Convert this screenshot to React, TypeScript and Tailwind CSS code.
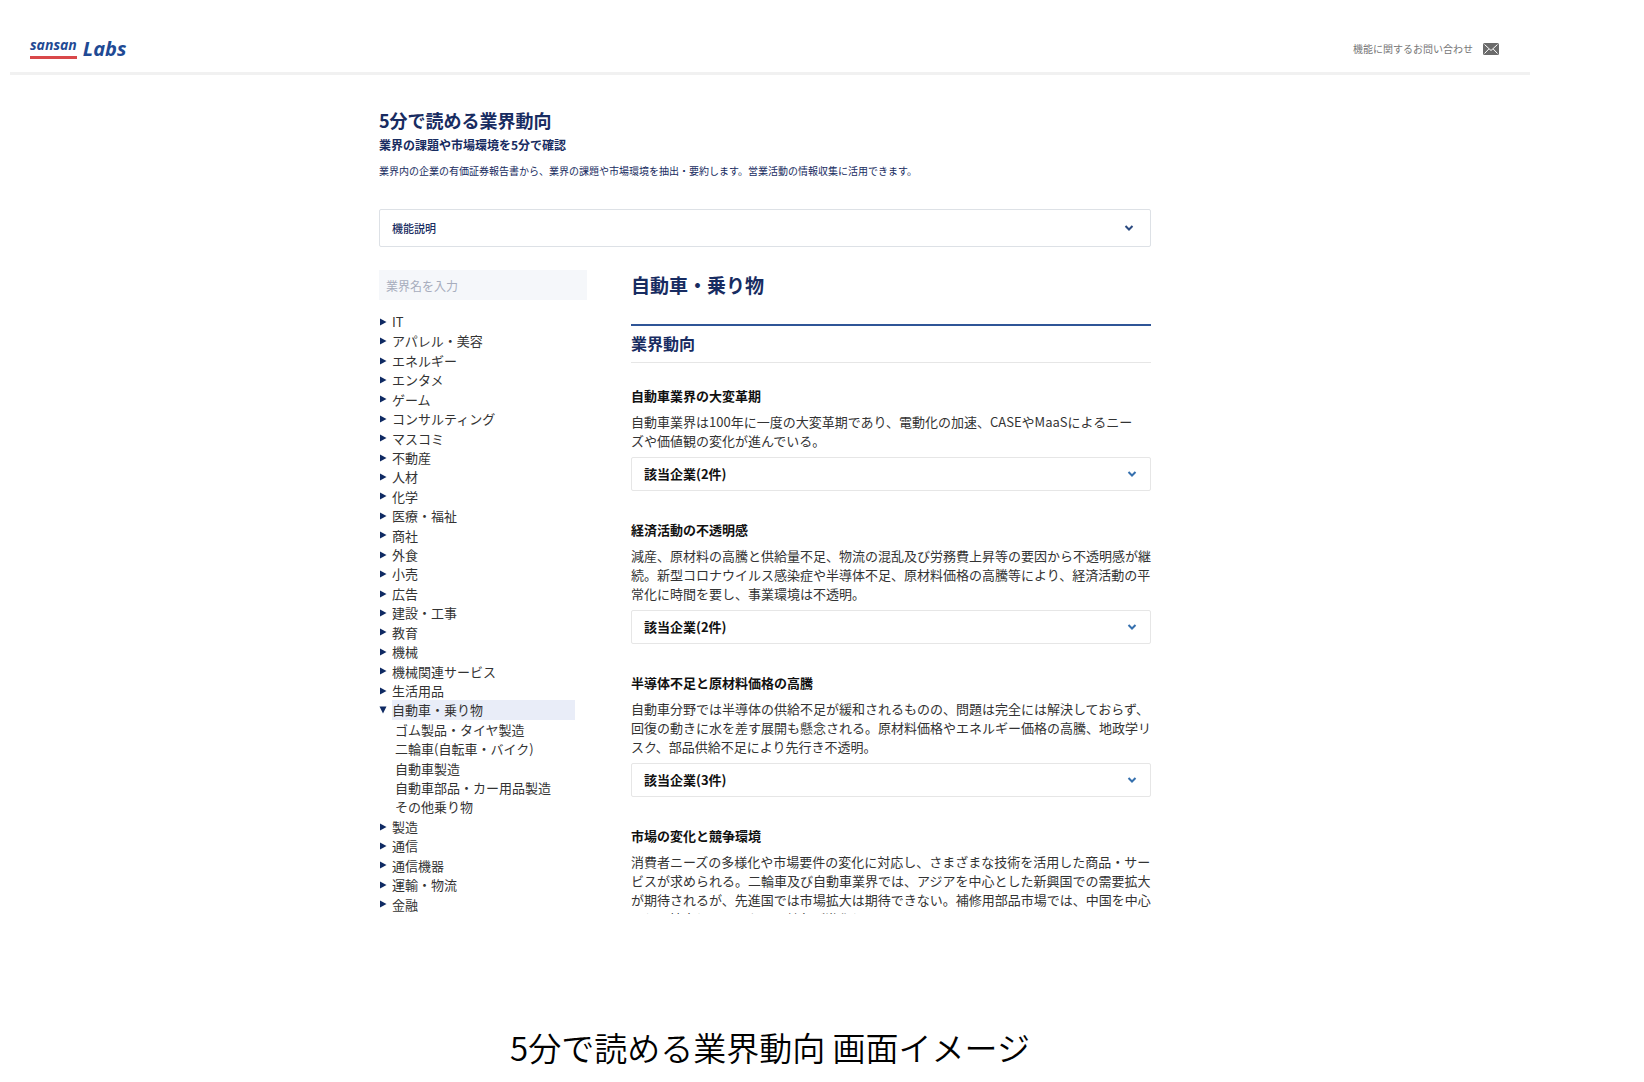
import type { FC } from 'react';

type Industry = {
  name: string;
  children?: string[];
};

type Topic = {
  title: string;
  body: string;
  companies?: number;
};

const industries: Industry[] = [
  { name: 'IT' },
  { name: 'アパレル・美容' },
  { name: 'エネルギー' },
  { name: 'エンタメ' },
  { name: 'ゲーム' },
  { name: 'コンサルティング' },
  { name: 'マスコミ' },
  { name: '不動産' },
  { name: '人材' },
  { name: '化学' },
  { name: '医療・福祉' },
  { name: '商社' },
  { name: '外食' },
  { name: '小売' },
  { name: '広告' },
  { name: '建設・工事' },
  { name: '教育' },
  { name: '機械' },
  { name: '機械関連サービス' },
  { name: '生活用品' },
  {
    name: '自動車・乗り物',
    children: [
      'ゴム製品・タイヤ製造',
      '二輪車(自転車・バイク)',
      '自動車製造',
      '自動車部品・カー用品製造',
      'その他乗り物',
    ],
  },
  { name: '製造' },
  { name: '通信' },
  { name: '通信機器' },
  { name: '運輸・物流' },
  { name: '金融' },
];

const topics: Topic[] = [
  {
    title: '自動車業界の大変革期',
    body: '自動車業界は100年に一度の大変革期であり、電動化の加速、CASEやMaaSによるニー\nズや価値観の変化が進んでいる。',
    companies: 2,
  },
  {
    title: '経済活動の不透明感',
    body: '減産、原材料の高騰と供給量不足、物流の混乱及び労務費上昇等の要因から不透明感が継\n続。新型コロナウイルス感染症や半導体不足、原材料価格の高騰等により、経済活動の平\n常化に時間を要し、事業環境は不透明。',
    companies: 2,
  },
  {
    title: '半導体不足と原材料価格の高騰',
    body: '自動車分野では半導体の供給不足が緩和されるものの、問題は完全には解決しておらず、\n回復の動きに水を差す展開も懸念される。原材料価格やエネルギー価格の高騰、地政学リ\nスク、部品供給不足により先行き不透明。',
    companies: 3,
  },
  {
    title: '市場の変化と競争環境',
    body: '消費者ニーズの多様化や市場要件の変化に対応し、さまざまな技術を活用した商品・サー\nビスが求められる。二輪車及び自動車業界では、アジアを中心とした新興国での需要拡大\nが期待されるが、先進国では市場拡大は期待できない。補修用部品市場では、中国を中心\nとして拡大しているため、競争が激化している。',
  },
];

const Chevron: FC<{ className: string }> = ({ className }) => (
  <svg
    viewBox="0 0 10 6"
    className={`h-[6px] w-[10px] shrink-0 fill-none stroke-2 ${className}`}
    aria-hidden="true"
  >
    <path d="M1.5 1l3.5 3.5L8.5 1" />
  </svg>
);

const Marker: FC<{ open: boolean }> = ({ open }) => (
  <svg viewBox="0 0 8 8" className="size-2 shrink-0 fill-[#0f2a63]" aria-hidden="true">
    <path d={open ? 'M0.5 0.5h7L4 7.5z' : 'M1 0.5v7L7.5 4z'} />
  </svg>
);

const Logo: FC = () => (
  <a href="#top" className="flex items-center gap-[6px] font-['Open_Sans',sans-serif] text-[#1f4a94]">
    <span className="flex flex-col gap-1">
      <span className="text-sm leading-[14px] font-bold italic">sansan</span>
      <span className="h-[3px] bg-[#d9484a]" />
    </span>
    <span className="text-xl leading-5 font-bold italic">Labs</span>
  </a>
);

const Header: FC = () => (
  <header className="flex items-center justify-between border-b-3 border-[#f1f1f1] pt-[25px] pr-[31px] pl-5">
    <div className="flex h-[47px] items-center">
      <Logo />
    </div>
    <a href="#contact" className="flex items-center gap-[10px] text-[10px] leading-4 text-[#777]">
      機能に関するお問い合わせ
      <svg viewBox="0 0 16 12" className="h-3 w-4" aria-hidden="true">
        <rect width="16" height="12" rx="1.5" fill="#6b6b6b" />
        <path
          d="M1.5 1.5L8 7.5l6.500-6M1.500 10.500l4.300-4.500M14.500 10.500l-4.300-4.500"
          fill="none"
          stroke="#fff"
          strokeWidth="1"
        />
      </svg>
    </a>
  </header>
);

const Sidebar: FC = () => (
  <aside className="flex w-52 shrink-0 flex-col">
    <input
      type="search"
      aria-label="業界名を入力"
      placeholder="業界名を入力"
      className="h-[30px] w-full bg-[#f5f7fa] px-[7px] text-xs text-[#222] outline-none placeholder:text-[#a7adbd]"
    />
    <ul className="mt-3 grid flex-1 auto-rows-fr text-[13px] leading-[19px] text-[#333]">
      {industries.flatMap(({ name, children }) => [
        <li key={name} className="mr-3 flex">
          <button type="button" aria-expanded={!!children} className="flex flex-1 items-center gap-[5px] text-left">
            <Marker open={!!children} />
            <span className={`flex-1 self-stretch ${children ? 'bg-[#e9edf8]' : ''}`}>{name}</span>
          </button>
        </li>,
        ...(children ?? []).map((child) => (
          <li key={child} className="pl-4">
            <a href="#industry">{child}</a>
          </li>
        )),
      ])}
    </ul>
  </aside>
);

const TopicSection: FC<{ topic: Topic }> = ({ topic }) => (
  <section>
    <h3 className="text-[13px] leading-5 font-bold text-[#111]">{topic.title}</h3>
    <p
      className={`mt-[6px] text-[13px] leading-[19px] whitespace-pre text-[#333] ${
        topic.companies ? '' : 'max-h-[62px] overflow-hidden'
      }`}
    >
      {topic.body}
    </p>
    {topic.companies && (
      <button
        type="button"
        className="mt-[7px] mb-[29px] flex h-[34px] w-full items-center justify-between rounded-xs border border-[#e6e6e6] pr-[13px] pl-3 text-[13px] font-bold text-[#111]"
      >
        該当企業({topic.companies}件)
        <Chevron className="stroke-[#3570ae]" />
      </button>
    )}
  </section>
);

const App: FC = () => (
  <div className="bg-white pr-[114px] pl-[10px] font-['Noto_Sans_CJK_JP',sans-serif]">
    <Header />

    <div className="pr-[10px]">
      <main className="mx-auto max-w-[772px] pt-[30px] text-[#182c61]">
        <h1 className="text-lg leading-[30px] font-bold">5分で読める業界動向</h1>
        <p className="text-xs leading-5 font-bold">業界の課題や市場環境を5分で確認</p>
        <p className="mt-2 text-[10px] leading-4">
          業界内の企業の有価証券報告書から、業界の課題や市場環境を抽出・要約します。営業活動の情報収集に活用できます。
        </p>

        <button
          type="button"
          className="mt-[30px] flex h-[38px] w-full items-center justify-between rounded-xs border border-[#dde1e6] pr-4 pl-3 text-[11px] font-medium"
        >
          機能説明
          <Chevron className="stroke-[#2b4a80]" />
        </button>

        <div className="mt-[23px] flex gap-11">
          <Sidebar />
          <div className="min-w-0 flex-1">
            <h2 className="text-[19px] leading-[30px] font-bold">自動車・乗り物</h2>
            <div className="mt-6 mb-[23px] border-t-2 border-b border-t-[#2f5597] border-b-[#e6e6e6] pt-[5px] pb-[7px]">
              <p className="text-base leading-6 font-bold">業界動向</p>
            </div>
            {topics.map((topic) => (
              <TopicSection key={topic.title} topic={topic} />
            ))}
          </div>
        </div>
      </main>
    </div>

    <p className="mt-[108px] pb-2 text-center text-[33px] leading-[50px] font-[350] text-black">
      5分で読める業界動向 画面イメージ
    </p>
  </div>
);

export default App;
